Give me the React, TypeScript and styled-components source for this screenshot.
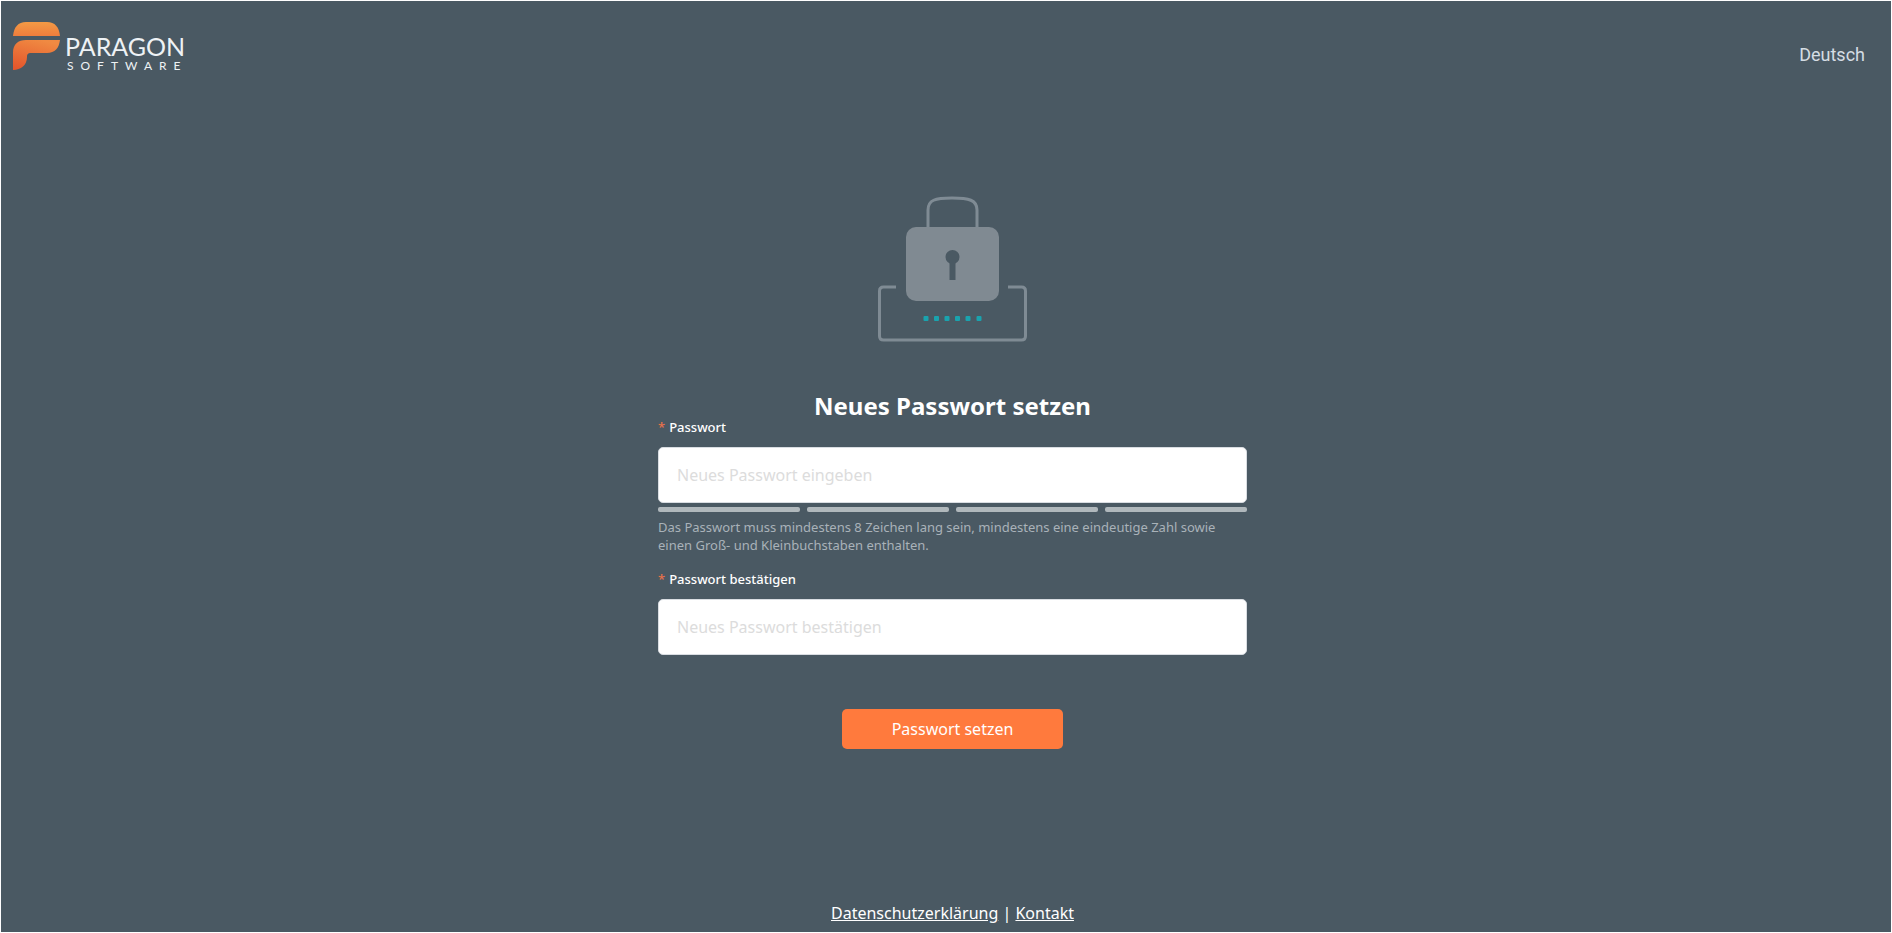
import React from "react";
import styled, { createGlobalStyle } from "styled-components";

const GlobalStyle = createGlobalStyle`
  *, *::before, *::after { box-sizing: border-box; }
  body {
    margin: 0;
    background: #4a5963;
    color: #fff;
    font-family: "Noto Sans", sans-serif;
  }
`;

const Page = styled.div`
  min-height: 100vh;
  display: flex;
  flex-direction: column;
  border: 1px solid #fff;
`;

const Header = styled.header`
  display: flex;
  justify-content: space-between;
  align-items: flex-start;
  padding: 21px 26px 0 12px;
`;

const Language = styled.button`
  margin-top: 20px;
  padding: 0;
  border: 0;
  background: none;
  color: #d5dde4;
  font: 400 18px/26px Roboto, sans-serif;
  cursor: pointer;
`;

const Main = styled.main`
  flex: 1;
  display: flex;
  flex-direction: column;
  align-items: center;
  padding: 124px 0 0 13px;
`;

const Title = styled.h1`
  margin: 51px 0 0;
  font-size: 24px;
  font-weight: 700;
  line-height: 26px;
`;

const Form = styled.form`
  width: 100%;
  max-width: 589px;
  display: flex;
  flex-direction: column;
`;

const Field = styled.div<{ $spaced?: boolean }>`
  display: flex;
  flex-direction: column;
  margin-top: ${(p) => (p.$spaced ? 17 : 0)}px;
`;

const Label = styled.label`
  margin-bottom: 12px;
  font-size: 13px;
  font-weight: 500;
  line-height: 16px;
`;

const Required = styled.span`
  margin-right: 4px;
  color: #e8714a;
`;

const Input = styled.input`
  width: 100%;
  height: 56px;
  padding: 0 18px;
  border: 1px solid #d9dde2;
  border-radius: 5px;
  background: #fff;
  color: #333;
  font: 400 16px/24px "Noto Sans", sans-serif;
  &::placeholder { color: #dcdcdc; opacity: 1; }
`;

const Strength = styled.div`
  display: grid;
  grid-template-columns: repeat(4, 1fr);
  gap: 7px;
  margin-top: 4px;
`;

const StrengthBar = styled.span`
  height: 5px;
  border-radius: 2px;
  background: #b0b8bc;
`;

const Hint = styled.p`
  margin: 6px 0 0;
  color: #a9b2b9;
  font-size: 13px;
  line-height: 18px;
`;

const Submit = styled.button`
  align-self: center;
  width: 221px;
  height: 40px;
  margin-top: 54px;
  border: 0;
  border-radius: 5px;
  background: #ff7a3d;
  color: #fff;
  font: 400 16px/24px "Noto Sans", sans-serif;
  cursor: pointer;
`;

const Footer = styled.footer`
  padding: 0 0 7px 13px;
  text-align: center;
  font-size: 16px;
  line-height: 24px;
`;

const FooterLink = styled.a`
  color: inherit;
  text-decoration: underline;
`;

const Logo = () => (
  <svg width="174" height="50" viewBox="0 0 174 50" role="img" aria-label="Paragon Software">
    <defs>
      <linearGradient id="flame" x1="0" y1="0" x2="0" y2="1">
        <stop offset="0" stopColor="#f39a45" />
        <stop offset="1" stopColor="#ef7d3c" />
      </linearGradient>
      <linearGradient id="ember" x1="0.6" y1="0" x2="0.2" y2="1">
        <stop offset="0" stopColor="#f08a42" />
        <stop offset="1" stopColor="#e4562c" />
      </linearGradient>
    </defs>
    <path d="M0 14C1 5 5 0 13 0H34C42 0 46 5 47 14Z" fill="url(#flame)" />
    <path d="M0 48V31C0 22 5 18 13 18H47C46 26 42 31 34 31H18C15 31 14 32 14 35C14 43 8 48 0 48Z" fill="url(#ember)" />
    <g fill="#eef2f5" fontFamily="Lato, sans-serif">
      <text x="52" y="34" fontSize="25">PARAGON</text>
      <text x="54" y="48" fontSize="12" letterSpacing="7">SOFTWARE</text>
    </g>
  </svg>
);

const LockPicture = () => (
  <svg width="150" height="146" viewBox="0 0 150 146" aria-hidden="true">
    <g fill="none" stroke="#7f8b94">
      <path d="M50 32V14C50 4 57 2 74 2S99 4 99 14V32" strokeWidth="3" />
      <path d="M18 91H5.5Q1.5 91 1.5 95V140Q1.5 144 5.5 144H143.5Q147.5 144 147.5 140V95Q147.5 91 143.5 91H130" strokeWidth="3" />
    </g>
    <rect x="28" y="31" width="93" height="74" rx="10" fill="#808a92" />
    <circle cx="74.5" cy="61" r="7" fill="#4a5963" />
    <path d="M71.5 64H77.5V84H71.5Z" fill="#4a5963" />
    <g fill="#1aa3ae">
      {[45.5, 56, 66.5, 77, 87.5, 98.5].map((x) => (
        <rect key={x} x={x} y="120" width="5" height="5" rx="1" />
      ))}
    </g>
  </svg>
);

export default function App() {
  return (
    <>
      <GlobalStyle />
      <Page>
        <Header>
          <Logo />
          <Language type="button">Deutsch</Language>
        </Header>
        <Main>
          <LockPicture />
          <Title>Neues Passwort setzen</Title>
          <Form onSubmit={(e) => e.preventDefault()}>
            <Field>
              <Label htmlFor="password"><Required>*</Required>Passwort</Label>
              <Input id="password" type="password" placeholder="Neues Passwort eingeben" aria-describedby="password-hint" />
              <Strength aria-hidden="true">
                <StrengthBar /><StrengthBar /><StrengthBar /><StrengthBar />
              </Strength>
              <Hint id="password-hint">
                Das Passwort muss mindestens 8 Zeichen lang sein, mindestens eine eindeutige Zahl sowie einen Groß- und Kleinbuchstaben enthalten.
              </Hint>
            </Field>
            <Field $spaced>
              <Label htmlFor="confirm"><Required>*</Required>Passwort bestätigen</Label>
              <Input id="confirm" type="password" placeholder="Neues Passwort bestätigen" />
            </Field>
            <Submit type="submit">Passwort setzen</Submit>
          </Form>
        </Main>
        <Footer>
          <FooterLink href="#privacy">Datenschutzerklärung</FooterLink> | <FooterLink href="#contact">Kontakt</FooterLink>
        </Footer>
      </Page>
    </>
  );
}
